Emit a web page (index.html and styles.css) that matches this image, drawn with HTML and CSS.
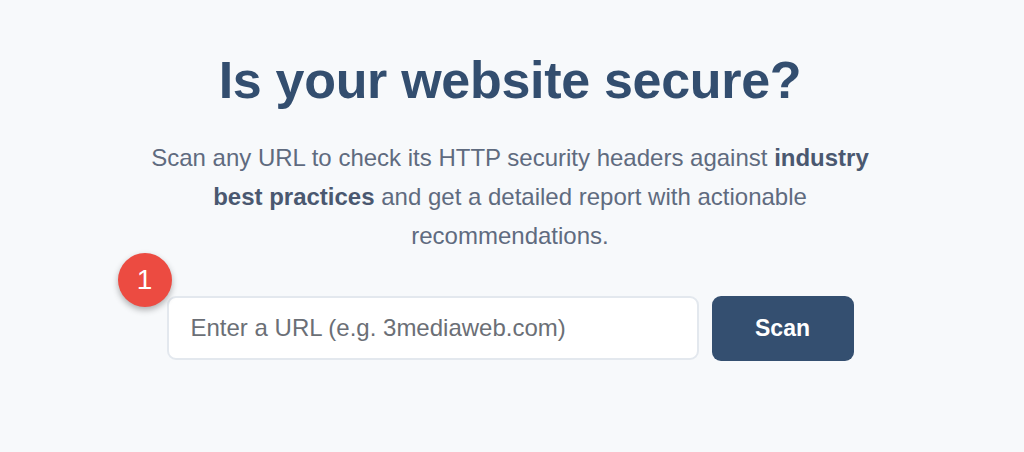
FILE: index.html
```html
<!DOCTYPE html>
<html>
<head>
<meta charset="utf-8">
<link rel="stylesheet" href="styles.css">
</head>
<body>
<main class="hero">
  <h1 class="title">Is your website secure?</h1>
  <p class="lead">Scan any URL to check its HTTP security headers against <strong>industry best practices</strong> and get a detailed report with actionable recommendations.</p>
  <form class="scan-form">
    <div class="field">
      <span class="badge">1</span>
      <input class="url-input" type="text" placeholder="Enter a URL (e.g. 3mediaweb.com)">
    </div>
    <button class="scan-btn" type="button">Scan</button>
  </form>
</main>
</body>
</html>
```
FILE: styles.css
```css
html, body {
  margin: 0;
  padding: 0;
  background: #f7f9fb;
  font-family: "Liberation Sans", Arial, sans-serif;
}
.hero {
  display: flex;
  flex-direction: column;
  align-items: center;
  padding-top: 49px;
  padding-right: 4px;
}
.title {
  margin: 0;
  font-size: 52px;
  line-height: 62px;
  font-weight: 700;
  color: #334e6f;
  letter-spacing: -0.3px;
}
.lead {
  margin: 27px 0 0;
  width: 740px;
  text-align: center;
  font-size: 24px;
  line-height: 39px;
  color: #5f6b7f;
}
.lead strong {
  color: #4a5870;
  font-weight: 700;
}
.scan-form {
  display: flex;
  gap: 13px;
  margin-top: 41px;
}
.field {
  position: relative;
}
.badge {
  position: absolute;
  left: -49px;
  top: -43px;
  width: 54px;
  height: 54px;
  border-radius: 50%;
  background: #ec4b41;
  color: #fff;
  font-size: 28px;
  line-height: 54px;
  text-align: center;
  box-shadow: 0 3px 6px rgba(0,0,0,0.3);
}
.url-input {
  box-sizing: border-box;
  width: 532px;
  height: 64px;
  border: 2px solid #e3e8ee;
  border-radius: 9px;
  background: #fff;
  padding: 0 22px;
  font-family: "Liberation Sans", Arial, sans-serif;
  font-size: 24px;
  color: #333;
  outline: none;
}
.url-input::placeholder {
  color: #6b6f76;
}
.scan-btn {
  width: 142px;
  height: 65px;
  border: none;
  border-radius: 9px;
  background: #344f70;
  color: #fff;
  font-family: "Liberation Sans", Arial, sans-serif;
  font-size: 23px;
  font-weight: 700;
  cursor: pointer;
}
```
